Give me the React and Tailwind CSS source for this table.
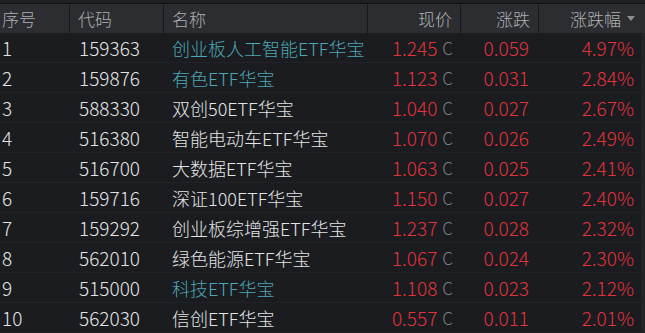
import React from 'react';

// 华宝ETF涨幅榜
const ROWS = [
  ['1', '159363', '创业板人工智能ETF华宝', '1.245', '0.059', '4.97%', true],
  ['2', '159876', '有色ETF华宝', '1.123', '0.031', '2.84%', true],
  ['3', '588330', '双创50ETF华宝', '1.040', '0.027', '2.67%', false],
  ['4', '516380', '智能电动车ETF华宝', '1.070', '0.026', '2.49%', false],
  ['5', '516700', '大数据ETF华宝', '1.063', '0.025', '2.41%', false],
  ['6', '159716', '深证100ETF华宝', '1.150', '0.027', '2.40%', false],
  ['7', '159292', '创业板综增强ETF华宝', '1.237', '0.028', '2.32%', false],
  ['8', '562010', '绿色能源ETF华宝', '1.067', '0.024', '2.30%', false],
  ['9', '515000', '科技ETF华宝', '1.108', '0.023', '2.12%', true],
  ['10', '562030', '信创ETF华宝', '0.557', '0.011', '2.01%', false],
];

const GRID = 'grid grid-cols-[70px_94px_204px_93px_78px_102px_4px]';

export default function App() {
  return (
    <div
      className="w-[645px] h-[333px] bg-[#1a1c20] overflow-hidden font-light"
      style={{ fontFamily: '"Noto Sans CJK SC", "Noto Sans", sans-serif' }}
    >
      <div className="h-[3px] bg-[#1f2024]" />
      {/* Header */}
      <div className={`${GRID} h-[30px] bg-[#2b2d31] border-t border-[#111214] text-[17px] text-[#aeb0b3] leading-none`}>
        <div className="flex items-center pl-[2px] border-r border-[#17181b]">序号</div>
        <div className="flex items-center pl-[8px] border-r border-[#17181b]">代码</div>
        <div className="flex items-center pl-[8px] border-r border-[#17181b]">名称</div>
        <div className="flex items-center justify-end pr-[8px] border-r border-[#17181b]">现价</div>
        <div className="flex items-center justify-end pr-[8px] border-r border-[#17181b]">涨跌</div>
        <div className="flex items-center justify-end pr-[6px] gap-[6px]">
          <span>涨跌幅</span>
          <svg width="8" height="6" viewBox="0 0 8 6" className="mt-[1px]">
            <path d="M0 0 H8 L4 5 Z" fill="#8c8e91" />
          </svg>
        </div>
        <div className="bg-[#2b2d31]" />
      </div>
      {/* Body */}
      {ROWS.map(([no, code, name, price, chg, pct, hl]) => (
        <div key={no} className={`${GRID} h-[30px] border-b border-[#202226] leading-none`}>
          <div className="flex items-center pl-[2px] text-[19px] text-[#e4e4e4]">{no}</div>
          <div className="flex items-center pl-[9px] text-[19px] text-[#e4e4e4]">{code}</div>
          <div className={`flex items-center pl-[8px] text-[18px] ${hl ? 'text-[#4fa6b6]' : 'text-[#e4e4e4]'}`}>{name}</div>
          <div className="flex items-center justify-end pr-[8px] gap-[5px] text-[19px] text-[#e2333b]">
            <span>{price}</span>
            <span className="text-[17px] text-[#7d7f82]">C</span>
          </div>
          <div className="flex items-center justify-end pr-[10px] text-[19px] text-[#e2333b]">{chg}</div>
          <div className="flex items-center justify-end pr-[7px] text-[19px] text-[#e2333b]">{pct}</div>
          <div className="bg-[#222428]" />
        </div>
      ))}
    </div>
  );
}
